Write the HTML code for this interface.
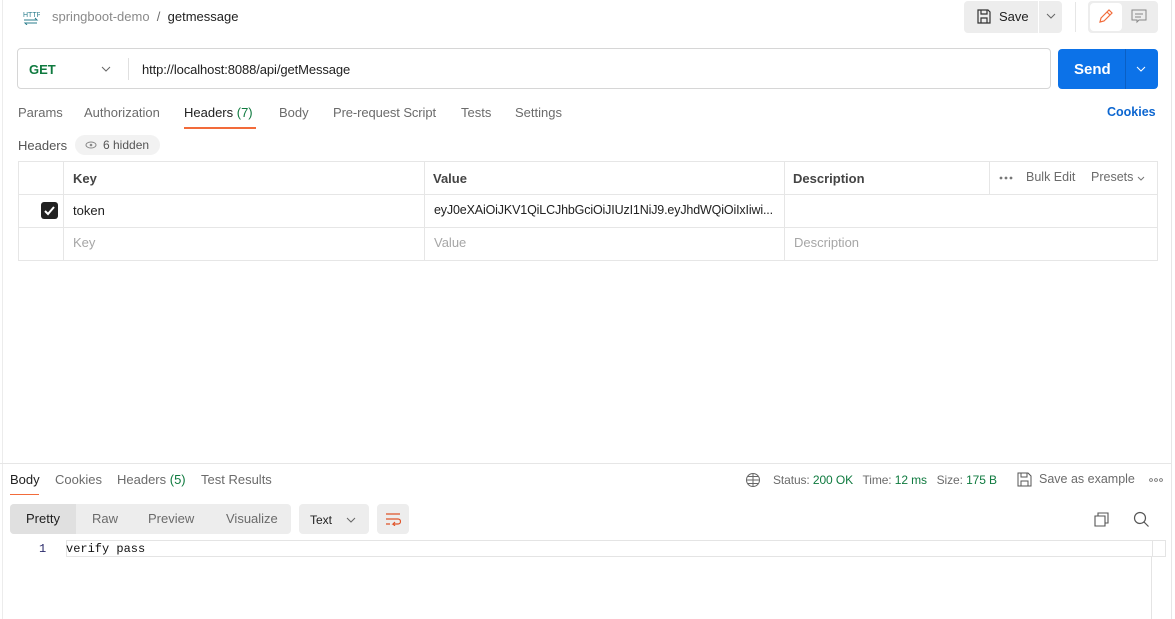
<!DOCTYPE html>
<html><head><meta charset="utf-8"><style>
*{box-sizing:border-box;margin:0;padding:0}
body{width:1175px;height:619px;overflow:hidden;background:#fff;font-family:"Liberation Sans",Arial,sans-serif;font-size:13px;color:#212121;position:relative}
.a{position:absolute;white-space:nowrap}
.g{color:#6b6b6b}
.tab{color:#6b6b6b}
</style></head><body>
<div class="a" style="left:2px;top:0;width:1px;height:619px;background:#ececec"></div>
<div class="a" style="left:1171px;top:0;width:1px;height:619px;background:#e6e6e6"></div>
<svg class="a" style="left:22px;top:9px" width="18" height="16" viewBox="0 0 18 16"><text x="1" y="8" font-size="7" fill="#2a7d8c" font-family="Liberation Sans">HTTP</text><path d="M2 11h13l-2-2M15 14H3l2 2" stroke="#2a7d8c" fill="none" stroke-width="1"/></svg>
<div class="a g" style="left:52px;top:9px;font-size:13px;color:#8a8a8a">springboot-demo <span style="color:#6b6b6b">&nbsp;/&nbsp;</span> <span style="color:#212121">getmessage</span></div>
<div class="a" style="left:964px;top:1px;width:98px;height:32px;background:#ededed;border-radius:4px"></div>
<div class="a" style="left:1038px;top:1px;width:1px;height:32px;background:#fff"></div>
<svg class="a" style="left:977px;top:9px" width="14" height="15" viewBox="0 0 14 15"><path d="M1 1h10l2 2v11H1z M4 1v4h6V1 M4 14V9h6v5" stroke="#333" fill="none" stroke-width="1.2"/></svg>
<div class="a" style="left:999px;top:9px">Save</div>
<svg class="a" style="left:1046px;top:13px" width="10" height="6"><path d="M1 1l4 4 4-4" stroke="#666" fill="none"/></svg>
<div class="a" style="left:1075px;top:2px;width:1px;height:30px;background:#e6e6e6"></div>
<div class="a" style="left:1088px;top:1px;width:70px;height:32px;background:#ededed;border-radius:4px"></div>
<div class="a" style="left:1090px;top:3px;width:32px;height:28px;background:#fff;border-radius:4px"></div>
<svg class="a" style="left:1098px;top:8px" width="16" height="16"><path d="M2 14l1-4 8-8 3 3-8 8z M9 4l3 3" stroke="#f26b3a" fill="none" stroke-width="1.2"/></svg>
<svg class="a" style="left:1131px;top:9px" width="16" height="15"><path d="M1 1h14v10H8l-2 2v-2H1z M4 5h8M4 8h6" stroke="#888" fill="none"/></svg>
<div class="a" style="left:17px;top:48px;width:1034px;height:41px;border:1px solid #d6d6d6;border-radius:4px"></div>
<div class="a" style="left:29px;top:62px;font-weight:bold;color:#0f7a3f;font-size:13px">GET</div>
<svg class="a" style="left:101px;top:66px" width="10" height="6"><path d="M1 1l4 4 4-4" stroke="#666" fill="none"/></svg>
<div class="a" style="left:128px;top:58px;width:1px;height:22px;background:#e0e0e0"></div>
<div class="a" style="left:142px;top:62px;letter-spacing:-0.1px">http://localhost:8088/api/getMessage</div>
<div class="a" style="left:1058px;top:49px;width:100px;height:40px;background:#0c72e8;border-radius:4px"></div>
<div class="a" style="left:1125px;top:49px;width:1px;height:40px;background:#0a5fc4"></div>
<div class="a" style="left:1074px;top:61px;color:#fff;font-weight:bold;font-size:15px">Send</div>
<svg class="a" style="left:1136px;top:66px" width="10" height="6"><path d="M1 1l4 4 4-4" stroke="#fff" fill="none"/></svg>
<div class="a tab" style="left:18px;top:105px">Params</div>
<div class="a tab" style="left:84px;top:105px">Authorization</div>
<div class="a" style="left:184px;top:105px">Headers <span style="color:#0f7a3f">(7)</span></div>
<div class="a" style="left:184px;top:127px;width:72px;height:2px;background:#f26b3a"></div>
<div class="a tab" style="left:279px;top:105px">Body</div>
<div class="a tab" style="left:333px;top:105px;letter-spacing:-0.1px">Pre-request Script</div>
<div class="a tab" style="left:461px;top:105px">Tests</div>
<div class="a tab" style="left:515px;top:105px">Settings</div>
<div class="a" style="left:1107px;top:105px;color:#0c66d0;font-weight:bold;font-size:12.5px">Cookies</div>
<div class="a" style="left:18px;top:138px;color:#555">Headers</div>
<div class="a" style="left:75px;top:135px;width:85px;height:20px;background:#f2f2f2;border-radius:10px"></div>
<svg class="a" style="left:85px;top:141px" width="12" height="8"><ellipse cx="6" cy="4" rx="5" ry="3" stroke="#888" fill="none"/><circle cx="6" cy="4" r="1.3" fill="#888"/></svg>
<div class="a" style="left:103px;top:138px;font-size:12px;color:#555">6 hidden</div>
<div class="a" style="left:18px;top:161px;width:1140px;height:100px;border:1px solid #e6e6e6"></div>
<div class="a" style="left:18px;top:194px;width:1140px;height:1px;background:#e6e6e6"></div>
<div class="a" style="left:18px;top:227px;width:1140px;height:1px;background:#e6e6e6"></div>
<div class="a" style="left:63px;top:161px;width:1px;height:100px;background:#e6e6e6"></div>
<div class="a" style="left:424px;top:161px;width:1px;height:100px;background:#e6e6e6"></div>
<div class="a" style="left:784px;top:161px;width:1px;height:100px;background:#e6e6e6"></div>
<div class="a" style="left:989px;top:161px;width:1px;height:33px;background:#e6e6e6"></div>
<div class="a" style="left:73px;top:171px;font-weight:bold;color:#444">Key</div>
<div class="a" style="left:433px;top:171px;font-weight:bold;color:#444">Value</div>
<div class="a" style="left:793px;top:171px;font-weight:bold;color:#444">Description</div>
<svg class="a" style="left:999px;top:176px" width="14" height="4"><circle cx="2" cy="2" r="1.4" fill="#777"/><circle cx="7" cy="2" r="1.4" fill="#777"/><circle cx="12" cy="2" r="1.4" fill="#777"/></svg>
<div class="a g" style="left:1026px;top:170px;font-size:12.5px">Bulk Edit</div>
<div class="a g" style="left:1091px;top:170px;font-size:12.5px">Presets</div>
<svg class="a" style="left:1137px;top:176px" width="8" height="5"><path d="M1 1l3 3 3-3" stroke="#777" fill="none"/></svg>
<div class="a" style="left:41px;top:202px;width:17px;height:17px;background:#212121;border-radius:3px"></div>
<svg class="a" style="left:43px;top:204px" width="13" height="13"><path d="M2 7l3 3 6-7" stroke="#fff" stroke-width="2" fill="none"/></svg>
<div class="a" style="left:73px;top:203px">token</div>
<div class="a" style="left:434px;top:203px;font-size:12.5px;letter-spacing:-0.15px">eyJ0eXAiOiJKV1QiLCJhbGciOiJIUzI1NiJ9.eyJhdWQiOiIxIiwi...</div>
<div class="a" style="left:73px;top:235px;color:#a6a6a6">Key</div>
<div class="a" style="left:434px;top:235px;color:#a6a6a6">Value</div>
<div class="a" style="left:794px;top:235px;color:#a6a6a6">Description</div>
<div class="a" style="left:0;top:463px;width:1171px;height:1px;background:#e6e6e6"></div>
<div class="a" style="left:10px;top:472px">Body</div>
<div class="a" style="left:10px;top:494px;width:29px;height:1px;background:#f26b3a"></div>
<div class="a tab" style="left:55px;top:472px">Cookies</div>
<div class="a tab" style="left:117px;top:472px">Headers <span style="color:#0f7a3f">(5)</span></div>
<div class="a tab" style="left:201px;top:472px">Test Results</div>
<svg class="a" style="left:745px;top:472px" width="16" height="16"><circle cx="8" cy="8" r="6.5" stroke="#666" fill="none"/><path d="M1.5 8h13M8 1.5v13M3 4.5h10M3 11.5h10" stroke="#666" fill="none"/></svg>
<div class="a" style="left:773px;top:473px;font-size:12px;color:#6b6b6b;letter-spacing:-0.1px">Status: <span style="color:#0f7a3f">200 OK</span>&nbsp;&nbsp; Time: <span style="color:#0f7a3f">12 ms</span>&nbsp;&nbsp; Size: <span style="color:#0f7a3f">175 B</span></div>
<svg class="a" style="left:1017px;top:472px" width="15" height="15"><path d="M1 1h10l3 3v10H1z M4 1v4h6V1 M4 14V9h7v5" stroke="#555" fill="none"/></svg>
<div class="a g" style="left:1039px;top:472px;font-size:12.5px">Save as example</div>
<svg class="a" style="left:1149px;top:478px" width="14" height="4"><circle cx="2" cy="2" r="1.4" stroke="#666" fill="none" stroke-width="0.8"/><circle cx="7" cy="2" r="1.4" stroke="#666" fill="none" stroke-width="0.8"/><circle cx="12" cy="2" r="1.4" stroke="#666" fill="none" stroke-width="0.8"/></svg>
<div class="a" style="left:10px;top:504px;width:281px;height:30px;background:#ededed;border-radius:4px"></div>
<div class="a" style="left:10px;top:504px;width:66px;height:30px;background:#e0e0e0;border-radius:4px 0 0 4px"></div>
<div class="a" style="left:26px;top:511px">Pretty</div>
<div class="a g" style="left:92px;top:511px">Raw</div>
<div class="a g" style="left:148px;top:511px">Preview</div>
<div class="a g" style="left:226px;top:511px">Visualize</div>
<div class="a" style="left:299px;top:504px;width:70px;height:30px;background:#ededed;border-radius:4px"></div>
<div class="a" style="left:310px;top:513px;font-size:12px">Text</div>
<svg class="a" style="left:346px;top:517px" width="10" height="6"><path d="M1 1l4 4 4-4" stroke="#666" fill="none"/></svg>
<div class="a" style="left:377px;top:504px;width:32px;height:30px;background:#ededed;border-radius:4px"></div>
<svg class="a" style="left:385px;top:512px" width="16" height="14"><path d="M1 2h14M1 7h12a2 2 0 0 1 0 5H8l2-2M8 12l2 2M1 12h4" stroke="#e0542a" fill="none" stroke-width="1.2"/></svg>
<svg class="a" style="left:1094px;top:512px" width="16" height="16"><path d="M4 4V1h10v10h-3 M1 4h10v10H1z" stroke="#555" fill="none" stroke-width="1.1"/></svg>
<svg class="a" style="left:1133px;top:511px" width="17" height="17"><circle cx="7" cy="7" r="5.5" stroke="#555" fill="none" stroke-width="1.2"/><path d="M11 11l4.5 4.5" stroke="#555" stroke-width="1.2"/></svg>
<div class="a" style="left:66px;top:540px;width:1100px;height:17px;border:1px solid #e4e4e4;border-right:none"></div>
<div class="a" style="left:1152px;top:540px;width:14px;height:17px;border:1px solid #e4e4e4"></div>
<div class="a" style="left:1151px;top:557px;width:1px;height:62px;background:#e4e4e4"></div>
<div class="a" style="left:39px;top:542px;font-family:'Liberation Mono',monospace;font-size:12px;color:#2a2a6b">1</div>
<div class="a" style="left:66px;top:542px;font-family:'Liberation Mono',monospace;font-size:12px;color:#111">verify pass</div>
</body></html>
